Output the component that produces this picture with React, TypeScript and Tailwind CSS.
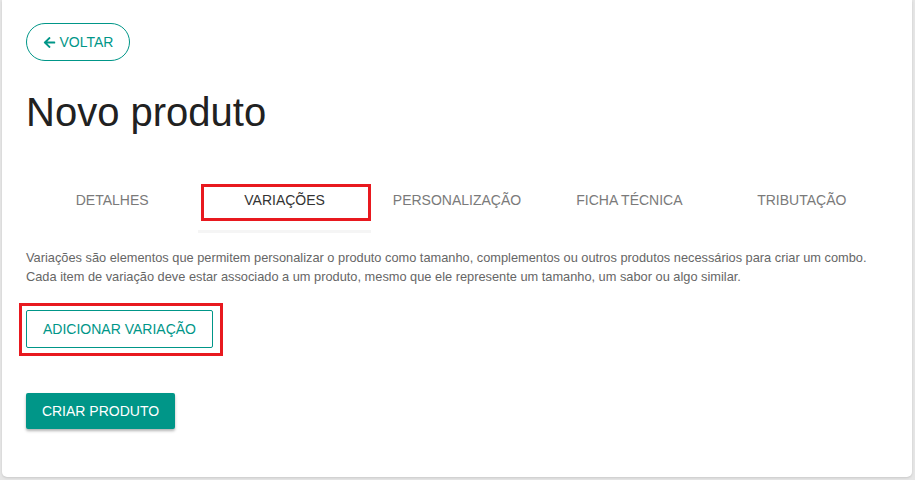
import { FaArrowLeft } from "react-icons/fa";

const tabs = ["DETALHES", "VARIAÇÕES", "PERSONALIZAÇÃO", "FICHA TÉCNICA", "TRIBUTAÇÃO"];

const Tabs = ({ active }: { active: number }) => (
  <div className="mt-[31px] grid grid-cols-5">
    {tabs.map((t, i) => (
      <div
        key={t}
        className={`relative flex h-[66px] items-center justify-center text-[14px] ${
          i === active ? "text-[#333333]" : "text-[#7a7a7a]"
        }`}
      >
        {t}
        {i === active && (
          <>
            {/* marcação vermelha da captura */}
            <div className="absolute left-[3px] right-0 top-[17px] bottom-[12px] border-[3px] border-[#e8191f]" />
            <div className="absolute inset-x-0 bottom-0 h-[3px] bg-[#f5f5f5]" />
          </>
        )}
      </div>
    ))}
  </div>
);

export default function App() {
  return (
    <div
      className="h-[480px] w-[915px] bg-[#e6e6e6] pl-[2px] pr-[3px] pb-[3px]"
      style={{ fontFamily: '"Liberation Sans", Arial, sans-serif' }}
    >
      <div className="h-full rounded-b-[5px] bg-white px-6 pt-[23px] shadow-sm">
        <button className="flex h-[38px] w-[104px] items-center justify-center gap-[4px] rounded-full border border-[#009688] text-[14px] text-[#009688]">
          <FaArrowLeft className="h-[13px] w-[13px]" />
          VOLTAR
        </button>

        <h1 className="mt-[27px] text-[40px] leading-[48px] text-[#212121]">Novo produto</h1>

        <Tabs active={1} />

        <p className="mt-[15px] text-[12.8px] leading-[19px] text-[#666666]">
          Variações são elementos que permitem personalizar o produto como tamanho, complementos ou outros produtos necessários para criar um combo.
          <br />
          Cada item de variação deve estar associado a um produto, mesmo que ele represente um tamanho, um sabor ou algo similar.
        </p>

        <div className="relative mt-[24px] w-fit">
          <button className="flex h-[38px] w-[187px] items-center justify-center rounded-[2px] border border-[#009688] text-[14px] text-[#009688]">
            ADICIONAR VARIAÇÃO
          </button>
          <div className="absolute -left-[7px] -right-[10px] -top-[7px] -bottom-[8px] border-[3px] border-[#e8191f]" />
        </div>

        <button className="mt-[45px] flex h-[36px] w-[149px] items-center justify-center rounded-[2px] bg-[#009688] text-[14px] font-medium text-white shadow-[0_2px_3px_rgba(0,0,0,0.3)]">
          CRIAR PRODUTO
        </button>
      </div>
    </div>
  );
}
